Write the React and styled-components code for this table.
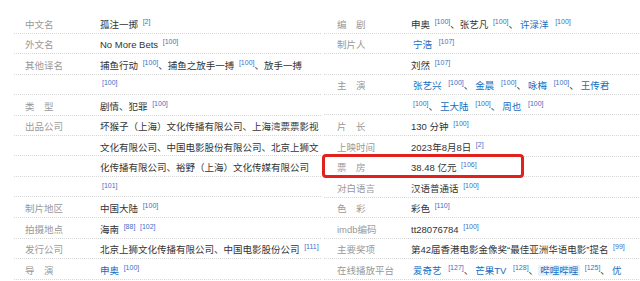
import React from 'react'
import styled, { createGlobalStyle } from 'styled-components'

const GlobalStyle = createGlobalStyle`
    html, body {
        margin: 0;
        padding: 0;
        background: #fff;
        overflow: hidden;
    }
    body {
        font-family: "Liberation Sans", "Noto Sans CJK SC", sans-serif;
    }
`

const leftRows = [
    { label: '中文名', items: [{ t: '孤注一掷', refs: ['[2]'] }] },
    { label: '外文名', items: [{ t: 'No More Bets', refs: ['[100]'] }] },
    {
        label: '其他译名',
        items: [
            { t: '捕鱼行动', refs: ['[100]'] },
            { t: '捕鱼之放手一搏', refs: ['[100]'] },
            { t: '放手一搏', refs: ['[100]'] },
        ],
    },
    { label: '类　型', items: [{ t: '剧情、犯罪', refs: ['[100]'] }] },
    {
        label: '出品公司',
        items: [{
            t: '坏猴子（上海）文化传播有限公司、上海湾票票影视文化有限公司、中国电影股份有限公司、北京上狮文化传播有限公司、裕野（上海）文化传媒有限公司',
            refs: ['[101]'],
        }],
    },
    { label: '制片地区', items: [{ t: '中国大陆', refs: ['[100]'] }] },
    { label: '拍摄地点', items: [{ t: '海南', refs: ['[88]', '[102]'] }] },
    { label: '发行公司', items: [{ t: '北京上狮文化传播有限公司、中国电影股份公司', refs: ['[111]'] }] },
    { label: '导　演', items: [{ t: '申奥', link: true, refs: ['[100]'] }] },
]

const rightRows = [
    {
        label: '编　剧',
        items: [
            { t: '申奥', refs: ['[100]'] },
            { t: '张艺凡', refs: ['[100]'] },
            { t: '许渌洋', link: true, refs: ['[100]'] },
        ],
    },
    { label: '制片人', items: [{ t: '宁浩', link: true, refs: ['[107]'] }] },
    { label: '', items: [{ t: '刘然', refs: ['[107]'] }] },
    {
        label: '主　演',
        items: ['张艺兴', '金晨', '咏梅', '王传君', '王大陆', '周也'].map(t => ({ t, link: true, refs: ['[100]'] })),
    },
    { label: '片　长', items: [{ t: '130 分钟', refs: ['[100]'] }] },
    { label: '上映时间', items: [{ t: '2023年8月8日', refs: ['[2]'] }] },
    { label: '票　房', items: [{ t: '38.48 亿元', refs: ['[106]'] }], highlight: true },
    { label: '对白语言', items: [{ t: '汉语普通话', refs: ['[100]'] }] },
    { label: '色　彩', items: [{ t: '彩色', refs: ['[110]'] }] },
    { label: 'imdb编码', items: [{ t: 'tt28076784', refs: ['[100]'] }] },
    { label: '主要奖项', items: [{ t: '第42届香港电影金像奖“最佳亚洲华语电影”提名', refs: ['[99]'] }] },
    {
        label: '在线播放平台',
        items: [
            { t: '爱奇艺', link: true, refs: ['[127]'] },
            { t: '芒果TV', link: true, refs: ['[128]'] },
            { t: '哔哩哔哩', link: true, mark: true, refs: ['[125]'] },
            { t: '优酷', link: true, refs: ['[126]'] },
        ],
    },
]

const Column = ({ rows, side }) => (
    <COLUMN>
        {rows.map((row, i) => (
            <ROW key={i} $side={side} $highlight={row.highlight}>
                <LABEL $side={side}>{row.label}</LABEL>
                <VALUE>
                    {row.items.map((item, j) => (
                        <React.Fragment key={j}>
                            {j > 0 && '、'}
                            {item.link
                                ? <LINK $side={side} $mark={item.mark}>{item.t}</LINK>
                                : item.t}
                            {item.refs.map((r, k) => (
                                <React.Fragment key={k}>
                                    {' '}<REF>{r}</REF>
                                </React.Fragment>
                            ))}
                        </React.Fragment>
                    ))}
                </VALUE>
            </ROW>
        ))}
    </COLUMN>
)

const App = () => (
    <>
        <GlobalStyle />
        <INFOBOX>
            <Column rows={leftRows} side="left" />
            <Column rows={rightRows} side="right" />
        </INFOBOX>
    </>
)

export default App

//全体
const INFOBOX = styled.div`
    display: grid;
    grid-template-columns: 308px 316px;
    column-gap: 2px;
    padding: 14.5px 0 0 14px;
    width: 640px;
    box-sizing: border-box;
    font-size: 9.5px;
    line-height: 20.5px;
    color: #333;
`

const COLUMN = styled.div`
    display: flex;
    flex-direction: column;
`

//一行、点線は折り返した行ごとに繰り返す
const ROW = styled.div`
    position: relative;
    display: flex;
    padding-left: ${p => (p.$side === 'left' ? '11px' : '13px')};
    padding-right: ${p => (p.$side === 'left' ? '0' : '12px')};
    &::before {
        content: '';
        position: absolute;
        inset: 0;
        background: repeating-linear-gradient(
            to bottom,
            transparent 0,
            transparent 17.5px,
            #d6d6d6 17.5px,
            #d6d6d6 18.5px,
            transparent 18.5px,
            transparent 20.5px
        );
        -webkit-mask-image: repeating-linear-gradient(to right, #000 0 1px, transparent 1px 2px);
        mask-image: repeating-linear-gradient(to right, #000 0 1px, transparent 1px 2px);
        pointer-events: none;
    }
    ${p => p.$highlight && `
    &::after {
        content: '';
        position: absolute;
        left: -2px;
        top: -4.5px;
        width: 202px;
        height: 24.5px;
        box-sizing: border-box;
        border: 3px solid #e2211c;
        border-radius: 4px;
        pointer-events: none;
    }
    `}
`

const LABEL = styled.div`
    flex: 0 0 ${p => (p.$side === 'left' ? '75px' : '74px')};
    color: #999;
    white-space: nowrap;
`

const VALUE = styled.div`
    flex: 1;
    min-width: 0;
`

const LINK = styled.a`
    color: #136ec2;
    text-decoration: none;
    cursor: pointer;
    padding: ${p => (p.$side === 'right' ? '0 2px' : '0')};
    background: ${p => (p.$mark ? '#e9f1fb' : 'transparent')};
`

const REF = styled.sup`
    font-size: 7px;
    line-height: 0;
    vertical-align: 4px;
    color: #3b6fc6;
    margin-left: 2px;
`
